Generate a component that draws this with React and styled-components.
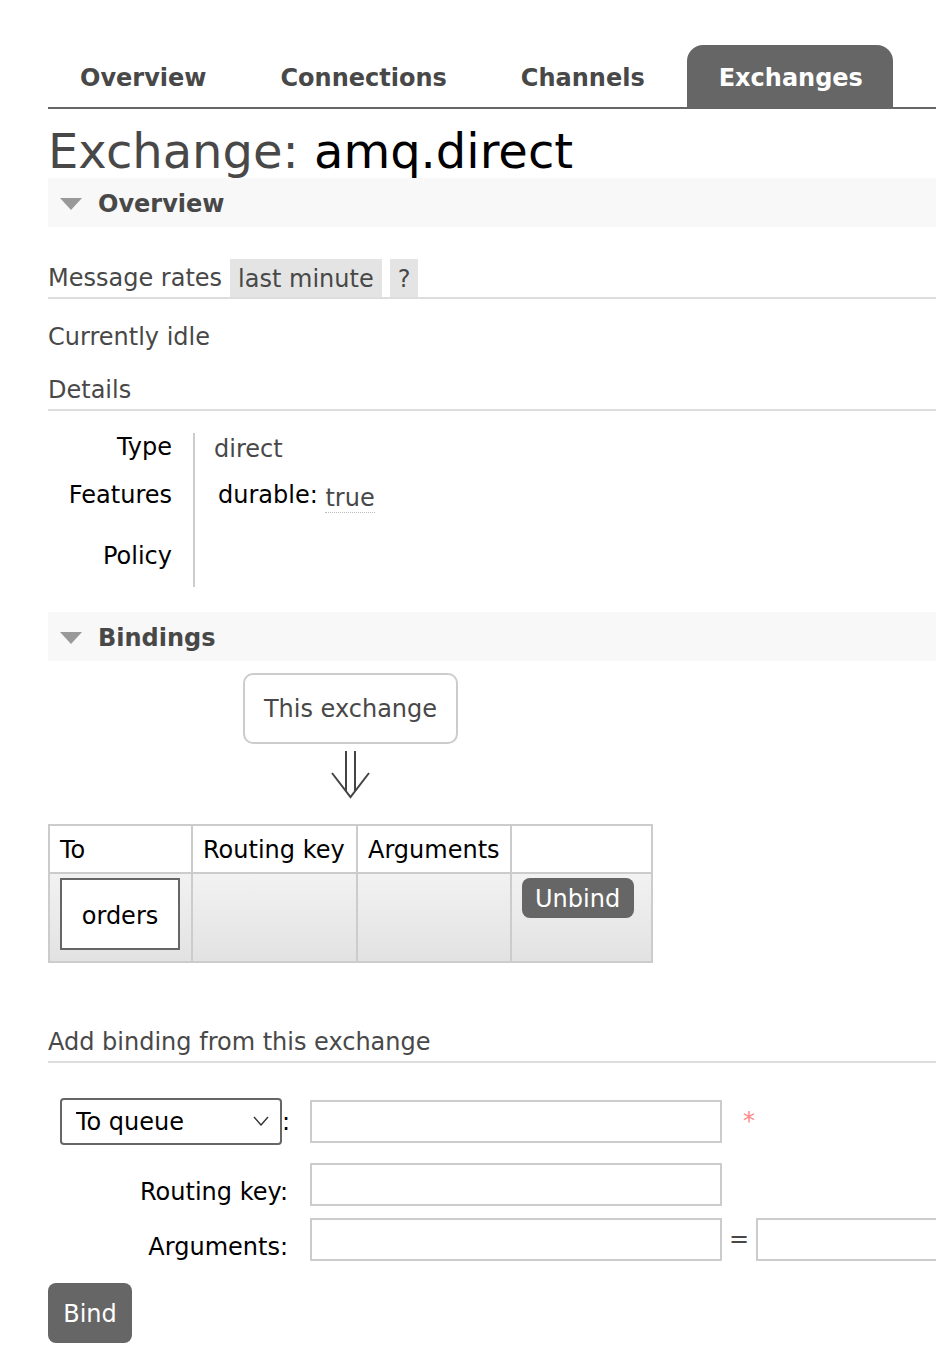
import styled, { createGlobalStyle } from "styled-components";

const GlobalStyle = createGlobalStyle`
  body {
    margin: 0;
    background: #fff;
    font-family: "DejaVu Sans", Verdana, sans-serif;
    color: #484848;
  }
  * { box-sizing: border-box; }
`;

const tabs = ["Overview", "Connections", "Channels", "Exchanges"];

function SectionHeader({ title }) {
  return (
    <SectionBar>
      <Triangle />
      <SectionTitle>{title}</SectionTitle>
    </SectionBar>
  );
}

export default function App() {
  const details = [
    { label: "Type", height: 48, value: <Value>direct</Value> },
    {
      label: "Features",
      height: 61,
      value: (
        <Feature>
          durable: <Dotted>true</Dotted>
        </Feature>
      ),
    },
    { label: "Policy", height: 45, value: null },
  ];

  return (
    <Page>
      <GlobalStyle />
      <TabBar>
        {tabs.map((t) => (
          <Tab key={t} $active={t === "Exchanges"}>
            {t}
          </Tab>
        ))}
      </TabBar>

      <Title>
        Exchange: <Name>amq.direct</Name>
      </Title>

      <SectionHeader title="Overview" />

      <SubHeading $mt={32}>
        Message rates <Chip>last minute</Chip>
        <Chip>?</Chip>
      </SubHeading>
      <Para>Currently idle</Para>
      <SubHeading $mt={20}>Details</SubHeading>

      <DetailsTable>
        {details.map((d) => (
          <DetailRow key={d.label} $h={d.height}>
            <DetailLabel>{d.label}</DetailLabel>
            <DetailValue>{d.value}</DetailValue>
          </DetailRow>
        ))}
      </DetailsTable>

      <SectionGap />
      <SectionHeader title="Bindings" />

      <ExchangeBox>This exchange</ExchangeBox>
      <Arrow width="42" height="48" viewBox="0 0 42 48">
        <line x1="16" y1="0" x2="16" y2="40" stroke="#444" strokeWidth="2" />
        <line x1="25" y1="0" x2="25" y2="40" stroke="#444" strokeWidth="2" />
        <polyline
          points="2,22 20.5,46 39,22"
          fill="none"
          stroke="#444"
          strokeWidth="2"
        />
      </Arrow>

      <BindTable>
        <thead>
          <tr>
            <Th $w={143}>To</Th>
            <Th $w={165}>Routing key</Th>
            <Th $w={152}>Arguments</Th>
            <Th $w={141}></Th>
          </tr>
        </thead>
        <tbody>
          <BodyRow>
            <Td>
              <QueueBox>orders</QueueBox>
            </Td>
            <Td />
            <Td />
            <Td>
              <Button $small>Unbind</Button>
            </Td>
          </BodyRow>
        </tbody>
      </BindTable>

      <SubHeading $mt={60}>Add binding from this exchange</SubHeading>

      <Form>
        <FormRow $mt={35}>
          <FormLabel $pr={20}>
            <SelectWrap>
              <Select defaultValue="queue">
                <option value="queue">To queue</option>
                <option value="exchange">To exchange</option>
              </Select>
              <Chevron width="16" height="10" viewBox="0 0 16 10">
                <polyline
                  points="1,1 8,9 15,1"
                  fill="none"
                  stroke="#333"
                  strokeWidth="1.4"
                />
              </Chevron>
            </SelectWrap>
            :
          </FormLabel>
          <TextInput />
          <Required>*</Required>
        </FormRow>
        <FormRow $mt={17}>
          <FormLabel $low>Routing key:</FormLabel>
          <TextInput />
        </FormRow>
        <FormRow $mt={11}>
          <FormLabel $low>Arguments:</FormLabel>
          <TextInput />
          <Equals>=</Equals>
          <TextInput $wide />
        </FormRow>
      </Form>

      <Button $big>Bind</Button>
    </Page>
  );
}

const Page = styled.div`
  padding: 45px 0 40px 48px;
  overflow: hidden;
  min-height: 1354px;
`;

const TabBar = styled.ul`
  display: flex;
  gap: 12px;
  list-style: none;
  margin: 0;
  padding: 0;
  border-bottom: 2px solid #666;
`;

const Tab = styled.li`
  height: 62px;
  line-height: 66px;
  padding: 0 30px 0 32px;
  font-size: 24px;
  font-weight: bold;
  color: ${(p) => (p.$active ? "#fff" : "#484848")};
  background: ${(p) => (p.$active ? "#666" : "transparent")};
  border-radius: 16px 16px 0 0;
`;

const Title = styled.h1`
  margin: 14px 0 -1px;
  font-size: 48px;
  line-height: 56px;
  font-weight: normal;
  color: #484848;
`;

const Name = styled.span`
  color: #000;
`;

const SectionBar = styled.div`
  display: flex;
  align-items: center;
  height: 49px;
  background: #f8f8f8;
  padding-left: 12px;
  padding-top: 2px;
`;

const Triangle = styled.span`
  width: 0;
  height: 0;
  border-left: 11px solid transparent;
  border-right: 11px solid transparent;
  border-top: 12px solid #999;
  margin-right: 16px;
`;

const SectionTitle = styled.span`
  font-size: 24px;
  font-weight: bold;
  color: #484848;
`;

const SectionGap = styled.div`
  height: 25px;
`;

const SubHeading = styled.h3`
  margin: ${(p) => p.$mt}px 0 0;
  display: flex;
  align-items: center;
  gap: 8px;
  height: 40px;
  font-size: 24px;
  font-weight: normal;
  color: #484848;
  border-bottom: 2px solid #ddd;
`;

const Chip = styled.span`
  height: 38px;
  line-height: 40px;
  padding: 0 8px;
  background: #e4e4e4;
  color: #484848;
`;

const Para = styled.p`
  margin: 24px 0 0;
  font-size: 24px;
  line-height: 28px;
`;

const DetailsTable = styled.div`
  margin-top: 22px;
  display: flex;
  flex-direction: column;
`;

const DetailRow = styled.div`
  display: grid;
  grid-template-columns: 147px 1fr;
  height: ${(p) => p.$h}px;
`;

const DetailLabel = styled.div`
  text-align: right;
  padding-right: 21px;
  font-size: 24px;
  line-height: 28px;
  color: #000;
  border-right: 2px solid #ccc;
`;

const DetailValue = styled.div`
  padding-left: 19px;
  font-size: 24px;
  line-height: 28px;
`;

const Value = styled.span`
  color: #484848;
  position: relative;
  top: 2px;
`;

const Feature = styled.span`
  color: #000;
  padding-left: 4px;
`;

const Dotted = styled.span`
  color: #484848;
  border-bottom: 1px dotted #bbb;
  position: relative;
  top: 3px;
`;

const ExchangeBox = styled.div`
  margin: 12px 0 0 195px;
  width: 215px;
  height: 71px;
  border: 2px solid #ccc;
  border-radius: 10px;
  display: flex;
  align-items: center;
  justify-content: center;
  font-size: 24px;
  color: #484848;
`;

const Arrow = styled.svg`
  display: block;
  margin: 7px 0 0 282px;
`;

const BindTable = styled.table`
  margin-top: 25px;
  border-collapse: collapse;
  font-size: 24px;
`;

const Th = styled.th`
  width: ${(p) => p.$w}px;
  height: 48px;
  padding: 2px 10px 0;
  text-align: left;
  font-weight: normal;
  color: #000;
  border: 2px solid #ccc;
  background: #fff;
`;

const BodyRow = styled.tr`
  background: linear-gradient(#f2f2f2, #e2e2e2);
`;

const Td = styled.td`
  height: 89px;
  padding: 4px 10px;
  vertical-align: top;
  border: 2px solid #ccc;
`;

const QueueBox = styled.div`
  width: 120px;
  height: 72px;
  padding-top: 3px;
  background: #fff;
  border: 2px solid #666;
  display: flex;
  align-items: center;
  justify-content: center;
  color: #000;
`;

const Button = styled.button`
  display: block;
  border: none;
  background: #666;
  color: #fff;
  font-family: "DejaVu Sans", Verdana, sans-serif;
  font-size: 24px;
  border-radius: 8px;
  cursor: pointer;
  padding: 2px 0 0;
  width: ${(p) => (p.$big ? "84px" : "112px")};
  height: ${(p) => (p.$big ? "60px" : "40px")};
  margin-top: ${(p) => (p.$big ? "22px" : "0")};
`;

const Form = styled.div`
  display: flex;
  flex-direction: column;
`;

const FormRow = styled.div`
  display: flex;
  align-items: center;
  margin-top: ${(p) => p.$mt}px;
`;

const FormLabel = styled.div`
  width: 262px;
  flex-shrink: 0;
  display: flex;
  align-items: center;
  justify-content: flex-end;
  padding-right: ${(p) => p.$pr ?? 22}px;
  padding-top: ${(p) => (p.$low ? "16px" : "0")};
  font-size: 24px;
  color: #000;
  line-height: 28px;
`;

const SelectWrap = styled.span`
  position: relative;
  display: inline-block;
`;

const Select = styled.select`
  appearance: none;
  width: 222px;
  height: 47px;
  padding: 0 30px 0 14px;
  border: 2px solid #666;
  border-radius: 4px;
  background: #fff;
  font-family: "DejaVu Sans", Verdana, sans-serif;
  font-size: 24px;
  color: #000;
`;

const Chevron = styled.svg`
  position: absolute;
  right: 13px;
  top: 18px;
  pointer-events: none;
`;

const TextInput = styled.input`
  width: ${(p) => (p.$wide ? "300px" : "412px")};
  height: 43px;
  border: 2px solid #ccc;
  background: #fff;
  font-size: 24px;
  flex-shrink: 0;
`;

const Required = styled.span`
  margin-left: 21px;
  color: #f88;
  font-size: 24px;
  position: relative;
  top: -1px;
`;

const Equals = styled.span`
  width: 34px;
  flex-shrink: 0;
  text-align: center;
  font-size: 24px;
  color: #484848;
`;
